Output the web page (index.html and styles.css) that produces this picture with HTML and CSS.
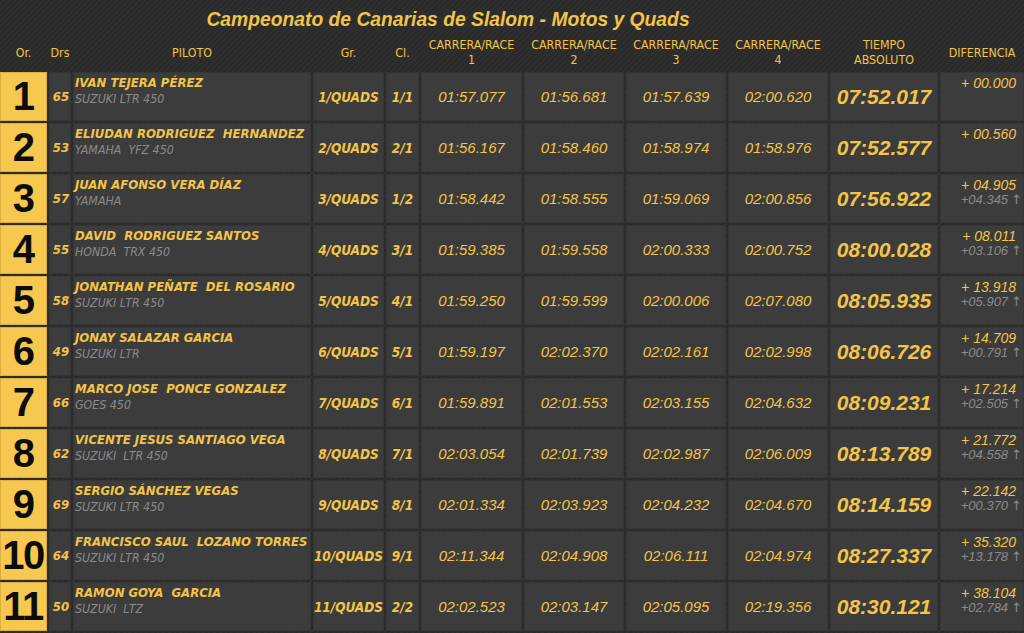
FILE: index.html
```html
<!DOCTYPE html>
<html lang="es">
<head>
<meta charset="utf-8">
<title>Campeonato de Canarias de Slalom - Motos y Quads</title>
<link rel="stylesheet" href="styles.css">
</head>
<body>
<div class="page">
  <h1 class="title">Campeonato de Canarias de Slalom - Motos y Quads</h1>
  <div class="board">
    <div class="row head">
      <div class="h">Or.</div>
      <div class="h">Drs</div>
      <div class="h">PILOTO</div>
      <div class="h">Gr.</div>
      <div class="h">Cl.</div>
      <div class="h">CARRERA/RACE<br>1</div>
      <div class="h">CARRERA/RACE<br>2</div>
      <div class="h">CARRERA/RACE<br>3</div>
      <div class="h">CARRERA/RACE<br>4</div>
      <div class="h">TIEMPO<br>ABSOLUTO</div>
      <div class="h">DIFERENCIA</div>
    </div>

    <div class="row">
      <div class="pos">1</div><div class="c drs">65</div>
      <div class="c pil"><span class="name">IVAN TEJERA PÉREZ</span><span class="veh">SUZUKI LTR 450</span></div>
      <div class="c gr">1/QUADS</div><div class="c cl">1/1</div>
      <div class="c t">01:57.077</div><div class="c t">01:56.681</div><div class="c t">01:57.639</div><div class="c t">02:00.620</div>
      <div class="c abs">07:52.017</div>
      <div class="c dif"><span class="d1">+ 00.000</span></div>
    </div>

    <div class="row">
      <div class="pos">2</div><div class="c drs">53</div>
      <div class="c pil"><span class="name">ELIUDAN RODRIGUEZ  HERNANDEZ</span><span class="veh">YAMAHA  YFZ 450</span></div>
      <div class="c gr">2/QUADS</div><div class="c cl">2/1</div>
      <div class="c t">01:56.167</div><div class="c t">01:58.460</div><div class="c t">01:58.974</div><div class="c t">01:58.976</div>
      <div class="c abs">07:52.577</div>
      <div class="c dif"><span class="d1">+ 00.560</span></div>
    </div>

    <div class="row">
      <div class="pos">3</div><div class="c drs">57</div>
      <div class="c pil"><span class="name">JUAN AFONSO VERA DÍAZ</span><span class="veh">YAMAHA</span></div>
      <div class="c gr">3/QUADS</div><div class="c cl">1/2</div>
      <div class="c t">01:58.442</div><div class="c t">01:58.555</div><div class="c t">01:59.069</div><div class="c t">02:00.856</div>
      <div class="c abs">07:56.922</div>
      <div class="c dif"><span class="d1">+ 04.905</span><span class="d2">+04.345<i class="up">↑</i></span></div>
    </div>

    <div class="row">
      <div class="pos">4</div><div class="c drs">55</div>
      <div class="c pil"><span class="name">DAVID  RODRIGUEZ SANTOS</span><span class="veh">HONDA  TRX 450</span></div>
      <div class="c gr">4/QUADS</div><div class="c cl">3/1</div>
      <div class="c t">01:59.385</div><div class="c t">01:59.558</div><div class="c t">02:00.333</div><div class="c t">02:00.752</div>
      <div class="c abs">08:00.028</div>
      <div class="c dif"><span class="d1">+ 08.011</span><span class="d2">+03.106<i class="up">↑</i></span></div>
    </div>

    <div class="row">
      <div class="pos">5</div><div class="c drs">58</div>
      <div class="c pil"><span class="name">JONATHAN PEÑATE  DEL ROSARIO</span><span class="veh">SUZUKI LTR 450</span></div>
      <div class="c gr">5/QUADS</div><div class="c cl">4/1</div>
      <div class="c t">01:59.250</div><div class="c t">01:59.599</div><div class="c t">02:00.006</div><div class="c t">02:07.080</div>
      <div class="c abs">08:05.935</div>
      <div class="c dif"><span class="d1">+ 13.918</span><span class="d2">+05.907<i class="up">↑</i></span></div>
    </div>

    <div class="row">
      <div class="pos">6</div><div class="c drs">49</div>
      <div class="c pil"><span class="name">JONAY SALAZAR GARCIA</span><span class="veh">SUZUKI LTR</span></div>
      <div class="c gr">6/QUADS</div><div class="c cl">5/1</div>
      <div class="c t">01:59.197</div><div class="c t">02:02.370</div><div class="c t">02:02.161</div><div class="c t">02:02.998</div>
      <div class="c abs">08:06.726</div>
      <div class="c dif"><span class="d1">+ 14.709</span><span class="d2">+00.791<i class="up">↑</i></span></div>
    </div>

    <div class="row">
      <div class="pos">7</div><div class="c drs">66</div>
      <div class="c pil"><span class="name">MARCO JOSE  PONCE GONZALEZ</span><span class="veh">GOES 450</span></div>
      <div class="c gr">7/QUADS</div><div class="c cl">6/1</div>
      <div class="c t">01:59.891</div><div class="c t">02:01.553</div><div class="c t">02:03.155</div><div class="c t">02:04.632</div>
      <div class="c abs">08:09.231</div>
      <div class="c dif"><span class="d1">+ 17.214</span><span class="d2">+02.505<i class="up">↑</i></span></div>
    </div>

    <div class="row">
      <div class="pos">8</div><div class="c drs">62</div>
      <div class="c pil"><span class="name">VICENTE JESUS SANTIAGO VEGA</span><span class="veh">SUZUKI  LTR 450</span></div>
      <div class="c gr">8/QUADS</div><div class="c cl">7/1</div>
      <div class="c t">02:03.054</div><div class="c t">02:01.739</div><div class="c t">02:02.987</div><div class="c t">02:06.009</div>
      <div class="c abs">08:13.789</div>
      <div class="c dif"><span class="d1">+ 21.772</span><span class="d2">+04.558<i class="up">↑</i></span></div>
    </div>

    <div class="row">
      <div class="pos">9</div><div class="c drs">69</div>
      <div class="c pil"><span class="name">SERGIO SÁNCHEZ VEGAS</span><span class="veh">SUZUKI LTR 450</span></div>
      <div class="c gr">9/QUADS</div><div class="c cl">8/1</div>
      <div class="c t">02:01.334</div><div class="c t">02:03.923</div><div class="c t">02:04.232</div><div class="c t">02:04.670</div>
      <div class="c abs">08:14.159</div>
      <div class="c dif"><span class="d1">+ 22.142</span><span class="d2">+00.370<i class="up">↑</i></span></div>
    </div>

    <div class="row">
      <div class="pos">10</div><div class="c drs">64</div>
      <div class="c pil"><span class="name">FRANCISCO SAUL  LOZANO TORRES</span><span class="veh">SUZUKI LTR 450</span></div>
      <div class="c gr">10/QUADS</div><div class="c cl">9/1</div>
      <div class="c t">02:11.344</div><div class="c t">02:04.908</div><div class="c t">02:06.111</div><div class="c t">02:04.974</div>
      <div class="c abs">08:27.337</div>
      <div class="c dif"><span class="d1">+ 35.320</span><span class="d2">+13.178<i class="up">↑</i></span></div>
    </div>

    <div class="row">
      <div class="pos">11</div><div class="c drs">50</div>
      <div class="c pil"><span class="name">RAMON GOYA  GARCIA</span><span class="veh">SUZUKI  LTZ</span></div>
      <div class="c gr">11/QUADS</div><div class="c cl">2/2</div>
      <div class="c t">02:02.523</div><div class="c t">02:03.147</div><div class="c t">02:05.095</div><div class="c t">02:19.356</div>
      <div class="c abs">08:30.121</div>
      <div class="c dif"><span class="d1">+ 38.104</span><span class="d2">+02.784<i class="up">↑</i></span></div>
    </div>
  </div>
</div>
</body>
</html>
```

FILE: styles.css
```css
* { box-sizing: border-box; }

html, body {
  margin: 0;
  padding: 0;
  height: 100%;
  overflow: hidden;
}

body {
  background-color: #2a2a2a;
  background-image: repeating-linear-gradient(135deg, #2a2a2a 0px, #2a2a2a 2px, #2f2f2f 2px, #2f2f2f 4px);
  font-family: "Liberation Sans", Arial, sans-serif;
  color: #f2c448;
}

.page {
  width: 1024px;
}

.title {
  margin: 0;
  padding: 9px 128px 0 0;
  height: 36px;
  text-align: center;
  font-size: 19.3px;
  line-height: 22px;
  font-weight: bold;
  font-style: italic;
  color: #f2c448;
}

.board {
  display: flex;
  flex-direction: column;
  gap: 2px;
}

.row {
  display: grid;
  grid-template-columns: 47px 22px 238px 71px 33px 101px 100px 100px 100px 108px 84px;
  column-gap: 2px;
  height: 49px;
}

.row.head {
  height: 34px;
}

.h {
  display: flex;
  align-items: center;
  justify-content: center;
  text-align: center;
  font-family: "DejaVu Sans Condensed", "Liberation Sans", sans-serif;
  font-size: 12.3px;
  line-height: 15px;
  color: #f2c448;
}

.pos {
  background: #f7c84f;
  border: 1px solid #dcae3e;
  color: #0c0c0c;
  font-family: "Liberation Sans", Arial, sans-serif;
  font-weight: bold;
  font-size: 40px;
  line-height: 47px;
  text-align: center;
  letter-spacing: -1.5px;
  text-indent: -1px;
}

.c {
  background: #3c3c3c;
  box-shadow: inset 0 0 0 1px #363636;
  display: flex;
  align-items: center;
  justify-content: center;
  font-style: italic;
  white-space: nowrap;
}

.drs,
.gr,
.cl {
  font-family: "DejaVu Sans Condensed", "Liberation Sans", sans-serif;
  font-weight: bold;
  font-size: 13.5px;
}

.drs {
  font-size: 13px;
  padding-left: 2px;
}

.pil {
  flex-direction: column;
  align-items: flex-start;
  justify-content: flex-start;
  padding: 2px 2px 0;
  font-family: "DejaVu Sans Condensed", "Liberation Sans", sans-serif;
  white-space: pre;
}

.name {
  font-weight: bold;
  font-size: 13px;
  line-height: 17px;
  color: #f2c448;
}

.veh {
  font-size: 12.3px;
  line-height: 16px;
  color: #8b8b8b;
}

.t {
  font-size: 15px;
}

.abs {
  font-size: 21px;
  font-weight: bold;
}

.dif {
  flex-direction: column;
  align-items: flex-end;
  justify-content: flex-start;
  padding: 4px 0 0;
}

.d1 {
  font-size: 14px;
  line-height: 15px;
  padding-right: 8px;
}

.d2 {
  font-size: 13px;
  line-height: 14px;
  color: #8b8b8b;
  padding-right: 2px;
}

.up {
  font-family: "DejaVu Sans", sans-serif;
  font-style: normal;
  font-size: 13px;
  margin-left: 3px;
}
```
